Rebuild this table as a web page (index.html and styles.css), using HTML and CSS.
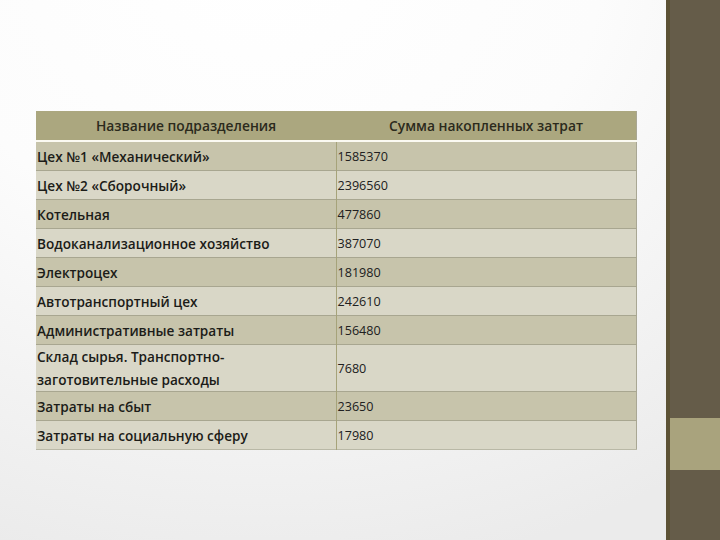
FILE: index.html
```html
<!DOCTYPE html>
<html lang="ru">
<head>
<meta charset="utf-8">
<link rel="stylesheet" href="styles.css">
</head>
<body>
<div class="slide">
  <main class="content">
    <table class="costs">
      <thead>
        <tr><th>Название подразделения</th><th>Сумма накопленных затрат</th></tr>
      </thead>
      <tbody>
        <tr class="odd"><td>Цех №1 «Механический»</td><td class="num">1585370</td></tr>
        <tr class="even"><td>Цех №2 «Сборочный»</td><td class="num">2396560</td></tr>
        <tr class="odd"><td>Котельная</td><td class="num">477860</td></tr>
        <tr class="even"><td>Водоканализационное хозяйство</td><td class="num">387070</td></tr>
        <tr class="odd"><td>Электроцех</td><td class="num">181980</td></tr>
        <tr class="even"><td>Автотранспортный цех</td><td class="num">242610</td></tr>
        <tr class="odd"><td>Административные затраты</td><td class="num">156480</td></tr>
        <tr class="even tall"><td>Склад сырья. Транспортно-<br>заготовительные расходы</td><td class="num">7680</td></tr>
        <tr class="odd"><td>Затраты на сбыт</td><td class="num">23650</td></tr>
        <tr class="even"><td>Затраты на социальную сферу</td><td class="num">17980</td></tr>
      </tbody>
    </table>
  </main>
  <aside class="sidebar">
    <div class="band-top"></div>
    <div class="band-light"></div>
    <div class="band-bottom"></div>
  </aside>
</div>
</body>
</html>
```
FILE: styles.css
```css
html, body {
  margin: 0;
  padding: 0;
}
body {
  width: 720px;
  height: 540px;
  overflow: hidden;
  font-family: "Open Sans", "Noto Sans", sans-serif;
}
.slide {
  display: flex;
  width: 720px;
  height: 540px;
}
.content {
  flex: 1;
  background: radial-gradient(ellipse 760px 620px at 260px -40px, #ffffff 0%, #fcfcfc 45%, #ebebeb 100%);
  padding: 111px 0 0 36px;
  box-sizing: border-box;
}
.costs {
  width: 601px;
  border-collapse: collapse;
  font-size: 13.6px;
  color: #1c1c18;
  border-right: 1px solid #a9a794;
  border-bottom: 1px solid #b9b8a6;
}
.costs th {
  background: #aba77f;
  height: 29px;
  padding: 0;
  font-weight: 600;
  font-size: 13.8px;
  color: #2b2a1c;
  text-align: center;
  border-bottom: 2px solid #fbfaf2;
}
.costs th:first-child { width: 300px; }
.costs td {
  padding: 0 0 0 1px;
  height: 28px;
  border-top: 1px solid #a8a690;
  vertical-align: middle;
}
.costs td:first-child {
  font-weight: 600;
}
.costs td.num {
  border-left: 1px solid #a6a37a;
  padding-left: 1px;
  font-weight: 400;
  font-size: 12.6px;
  color: #202020;
}
.costs tbody tr:first-child td { border-top: none; }
.odd td { background: #c7c4ab; }
.even td { background: #d9d7c7; }
.tall td { height: 45px; line-height: 23px; }
.sidebar {
  width: 54px;
  box-sizing: border-box;
  display: flex;
  flex-direction: column;
  border-left: 4px solid #5c5235;
}
.band-top {
  height: 418px;
  background: #655c49;
}
.band-light {
  height: 52px;
  background: #a9a37d;
}
.band-bottom {
  flex: 1;
  background: #655c49;
}
```
